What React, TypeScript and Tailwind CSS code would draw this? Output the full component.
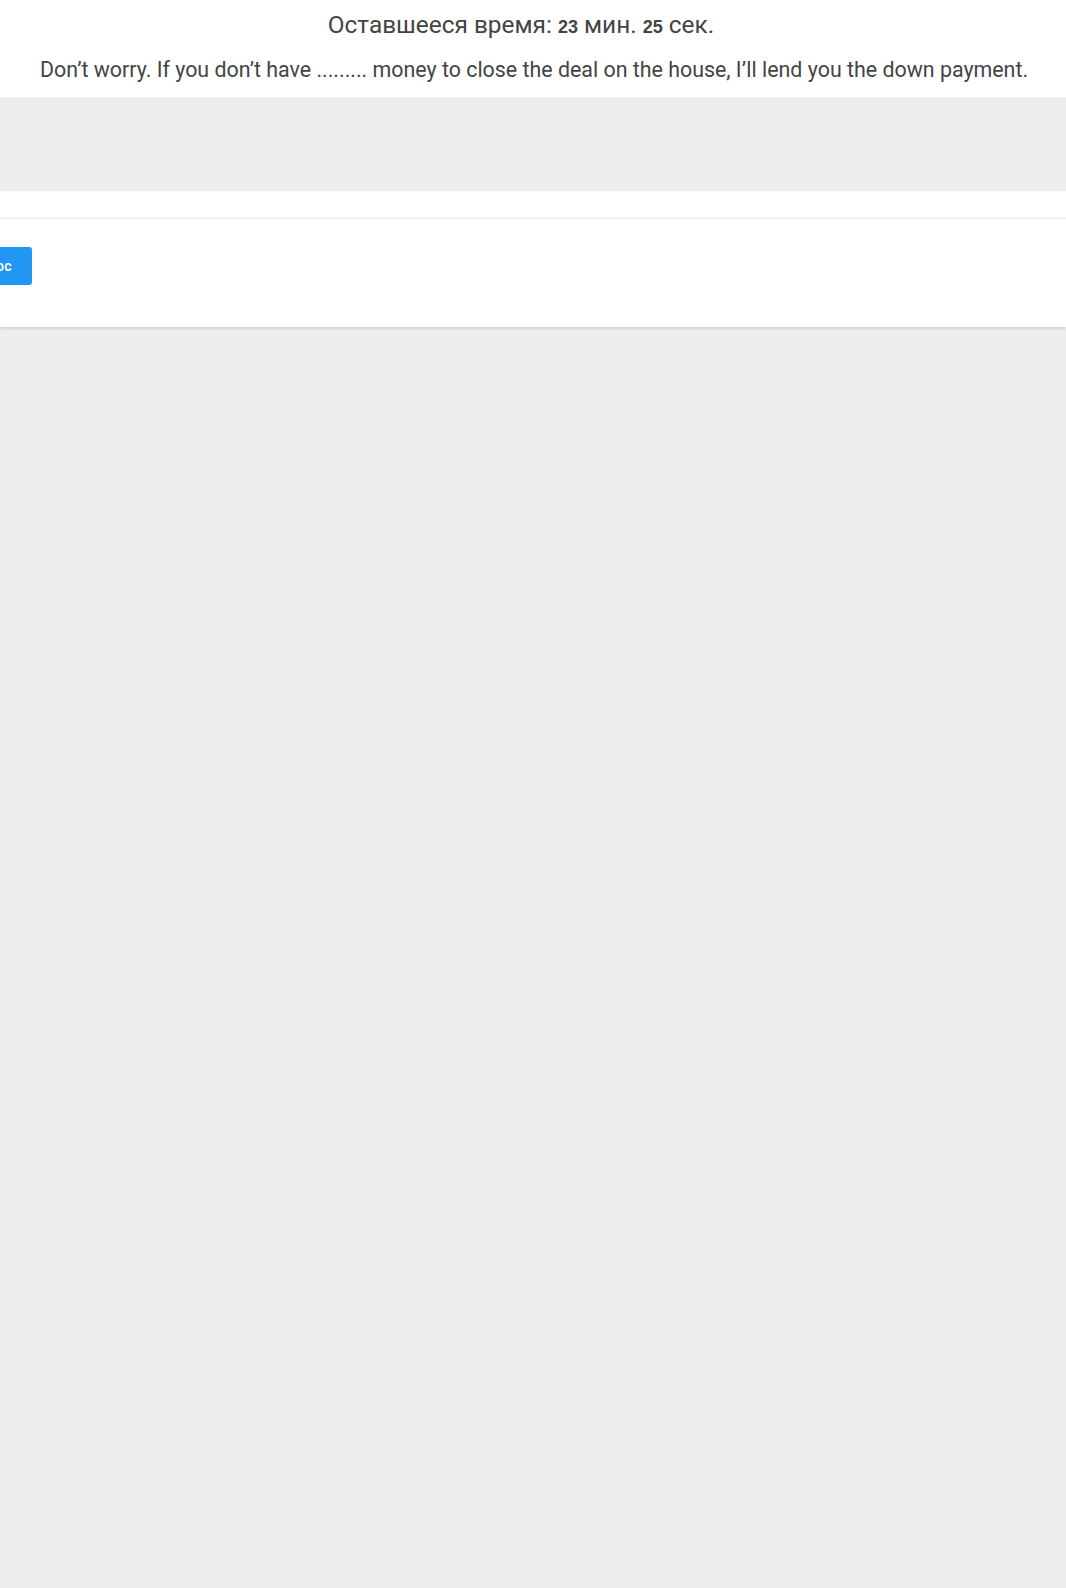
import React from 'react';

const App: React.FC = () => {
  return (
    <div className="min-h-[1588px] bg-[#eeeeee] overflow-hidden" style={{ fontFamily: 'Roboto, "Noto Sans", sans-serif' }}>
      <div className="bg-white text-[#444444]">
        <div className="h-[50px] flex items-center justify-center text-[24.4px] pr-[24px]">
          <span>
            Оставшееся время:{' '}
            <b className="text-[18px] font-bold" style={{ fontFamily: '"Liberation Sans", Arial, sans-serif' }}>23</b> мин.{' '}
            <b className="text-[18px] font-bold" style={{ fontFamily: '"Liberation Sans", Arial, sans-serif' }}>25</b> сек.
          </span>
        </div>
        <div className="h-[47px] flex items-start justify-center text-[21.4px] pt-[4px] pl-[2px]">
          Don’t worry. If you don’t have ......... money to close the deal on the house, I’ll lend you the down payment.
        </div>
      </div>

      <div className="h-[94px] bg-[#eeeeee]" />

      <div className="bg-white shadow-[0_2px_3px_rgba(0,0,0,0.12)]">
        <div className="h-[28px] border-b-2 border-[#f2f2f2]" />
        <div className="h-[108px] flex items-start pt-[28px]">
          <button
            className="ml-[-148px] w-[180px] h-[38px] bg-[#2196f3] rounded-[3px] text-white text-[14px] font-medium text-right pr-[20px] tracking-wide"
          >
            вопрос
          </button>
        </div>
      </div>
    </div>
  );
};

export default App;
